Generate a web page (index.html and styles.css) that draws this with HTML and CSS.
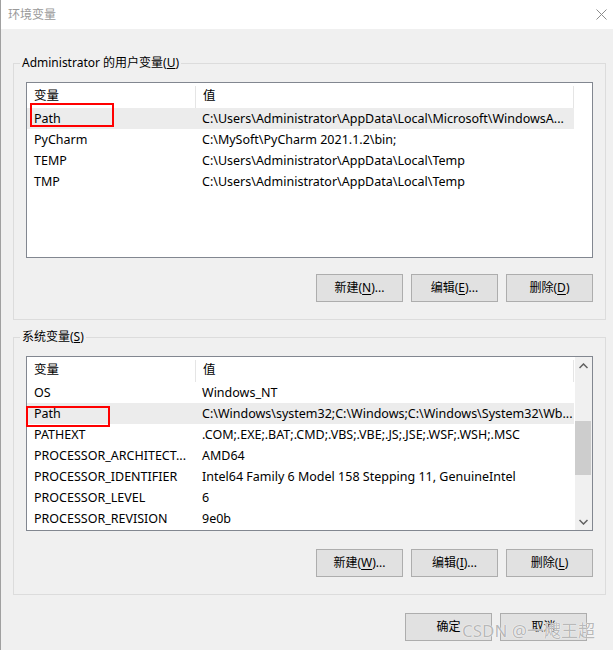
FILE: index.html
```html
<!DOCTYPE html>
<html lang="zh-CN">
<head>
<meta charset="utf-8">
<title>环境变量</title>
<link rel="stylesheet" href="styles.css">
</head>
<body>
<div class="window">
  <div class="titlebar">
    <span class="title">环境变量</span>
    <svg class="close" width="11" height="11" viewBox="0 0 11 11"><path d="M0.5 0.5 L10.5 10.5 M10.5 0.5 L0.5 10.5" stroke="#8c8c8c" stroke-width="1" fill="none"/></svg>
  </div>
  <div class="content">
    <fieldset class="group">
      <legend>Administrator 的用户变量(<u>U</u>)</legend>
      <div class="group-body">
        <div class="list user-list">
          <div class="list-main">
            <div class="header">
              <div class="hcell c1">变量</div>
              <div class="hcell c2">值</div>
            </div>
            <div class="row selected"><div class="cell c1">Path</div><div class="cell c2">C:\Users\Administrator\AppData\Local\Microsoft\WindowsA...</div></div>
            <div class="row"><div class="cell c1">PyCharm</div><div class="cell c2">C:\MySoft\PyCharm 2021.1.2\bin;</div></div>
            <div class="row"><div class="cell c1">TEMP</div><div class="cell c2">C:\Users\Administrator\AppData\Local\Temp</div></div>
            <div class="row"><div class="cell c1">TMP</div><div class="cell c2">C:\Users\Administrator\AppData\Local\Temp</div></div>
          </div>
          <div class="mark mark-user"></div>
        </div>
        <div class="buttons">
          <button class="btn">新建(<u>N</u>)...</button>
          <button class="btn">编辑(<u>E</u>)...</button>
          <button class="btn">删除(<u>D</u>)</button>
        </div>
      </div>
    </fieldset>

    <fieldset class="group sys">
      <legend>系统变量(<u>S</u>)</legend>
      <div class="group-body">
        <div class="list sys-list">
          <div class="list-main">
            <div class="header">
              <div class="hcell c1">变量</div>
              <div class="hcell c2">值</div>
            </div>
            <div class="row"><div class="cell c1">OS</div><div class="cell c2">Windows_NT</div></div>
            <div class="row selected"><div class="cell c1">Path</div><div class="cell c2">C:\Windows\system32;C:\Windows;C:\Windows\System32\Wb...</div></div>
            <div class="row"><div class="cell c1">PATHEXT</div><div class="cell c2">.COM;.EXE;.BAT;.CMD;.VBS;.VBE;.JS;.JSE;.WSF;.WSH;.MSC</div></div>
            <div class="row"><div class="cell c1">PROCESSOR_ARCHITECT...</div><div class="cell c2">AMD64</div></div>
            <div class="row"><div class="cell c1">PROCESSOR_IDENTIFIER</div><div class="cell c2">Intel64 Family 6 Model 158 Stepping 11, GenuineIntel</div></div>
            <div class="row"><div class="cell c1">PROCESSOR_LEVEL</div><div class="cell c2">6</div></div>
            <div class="row"><div class="cell c1">PROCESSOR_REVISION</div><div class="cell c2">9e0b</div></div>
          </div>
          <div class="scrollbar">
            <div class="sb-btn">
              <svg width="9" height="6" viewBox="0 0 9 6"><path d="M0.5 5 L4.5 1 L8.5 5" stroke="#606060" stroke-width="1.5" fill="none"/></svg>
            </div>
            <div class="sb-track"><div class="sb-thumb"></div></div>
            <div class="sb-btn">
              <svg width="9" height="6" viewBox="0 0 9 6"><path d="M0.5 1 L4.5 5 L8.5 1" stroke="#606060" stroke-width="1.5" fill="none"/></svg>
            </div>
          </div>
          <div class="mark mark-sys"></div>
        </div>
        <div class="buttons">
          <button class="btn">新建(<u>W</u>)...</button>
          <button class="btn">编辑(<u>I</u>)...</button>
          <button class="btn">删除(<u>L</u>)</button>
        </div>
      </div>
    </fieldset>

    <div class="buttons footer">
      <button class="btn">确定</button>
      <button class="btn">取消</button>
    </div>
    <div class="watermark">CSDN @一飕王超</div>
  </div>
</div>
</body>
</html>
```

FILE: styles.css
```css
* { box-sizing: border-box; }
html, body { margin: 0; padding: 0; }
body {
  width: 613px;
  height: 650px;
  overflow: hidden;
  font-family: "Noto Sans", "Noto Sans CJK SC", sans-serif;
  font-size: 12px;
  color: #000;
  background: #f0f0f0;
}
.window {
  width: 613px;
  height: 650px;
  display: flex;
  flex-direction: column;
  border-left: 1px solid #a0a0a0;
}
.titlebar {
  height: 29px;
  flex: none;
  background: #fff;
  display: flex;
  align-items: center;
  justify-content: space-between;
  padding: 0 6px 0 7px;
}
.title {
  color: #999;
  font-size: 12px;
  line-height: 16px;
}
.close { display: block; }
.content {
  flex: 1;
  background: #f0f0f0;
  padding: 26px 7px 0 12px;
  position: relative;
}
.group {
  margin: 0;
  padding: 0;
  border: 1px solid #dcdcdc;
  min-width: 0;
}
.group legend {
  margin-left: 6px;
  padding: 0 2px;
  line-height: 16px;
  font-size: 12px;
}
.group.sys { margin-top: 9px; }
.group-body {
  padding: 11px 12px 17px 12px;
}
.list {
  position: relative;
  border: 1px solid #828790;
  background: #fff;
  display: flex;
  height: 176px;
}
.sys-list { height: 175px; }
.list-main {
  width: 547px;
  flex: none;
  overflow: hidden;
  font-size: 12.5px;
}
.header {
  display: flex;
  height: 25px;
}
.hcell {
  position: relative;
  line-height: 25px;
  padding-left: 7px;
}
.hcell::after {
  content: "";
  position: absolute;
  right: 0;
  top: 3px;
  bottom: 0;
  width: 1px;
  background: #e5e5e5;
}
.c1 { width: 169px; flex: none; }
.c2 { flex: 1; min-width: 0; }
.row {
  display: flex;
  height: 21px;
  line-height: 21px;
}
.row.selected { background: #ececec; }
.cell {
  padding-left: 7px;
  white-space: nowrap;
  overflow: hidden;
}
.cell.c2 { padding-left: 6px; }
.scrollbar {
  width: 17px;
  flex: none;
  margin-left: 1px;
  background: #f0f0f0;
  display: flex;
  flex-direction: column;
}
.sb-btn {
  height: 17px;
  display: flex;
  align-items: center;
  justify-content: center;
}
.sb-track {
  flex: 1;
  padding-top: 47px;
}
.sb-thumb {
  width: 16px;
  height: 54px;
  background: #cdcdcd;
}
.mark {
  position: absolute;
  border: 2px solid #ff0000;
}
.mark-user { left: 3px; top: 20px; width: 84px; height: 24px; }
.mark-sys { left: -1px; top: 49px; width: 84px; height: 21px; }
.buttons {
  display: flex;
  justify-content: flex-end;
  gap: 8px;
  margin-top: 16px;
}
.sys .buttons { margin-top: 18px; }
.btn {
  width: 87px;
  height: 28px;
  background: #e1e1e1;
  border: 1px solid #adadad;
  border-radius: 0;
  font-family: "Noto Sans", "Noto Sans CJK SC", sans-serif;
  font-size: 12px;
  color: #000;
  padding: 0;
  line-height: 26px;
}
.btn u { text-underline-offset: 2px; }
.footer {
  margin-top: 18px;
  padding-right: 19px;
}
.watermark {
  position: absolute;
  left: 461px;
  top: 588px;
  font-family: "Noto Sans", "Noto Sans CJK SC", sans-serif;
  font-size: 17px;
  color: rgba(175, 175, 175, 0.9);
  text-shadow: 0 0 1px #fff, 0 0 1px #fff;
  white-space: nowrap;
}
```
